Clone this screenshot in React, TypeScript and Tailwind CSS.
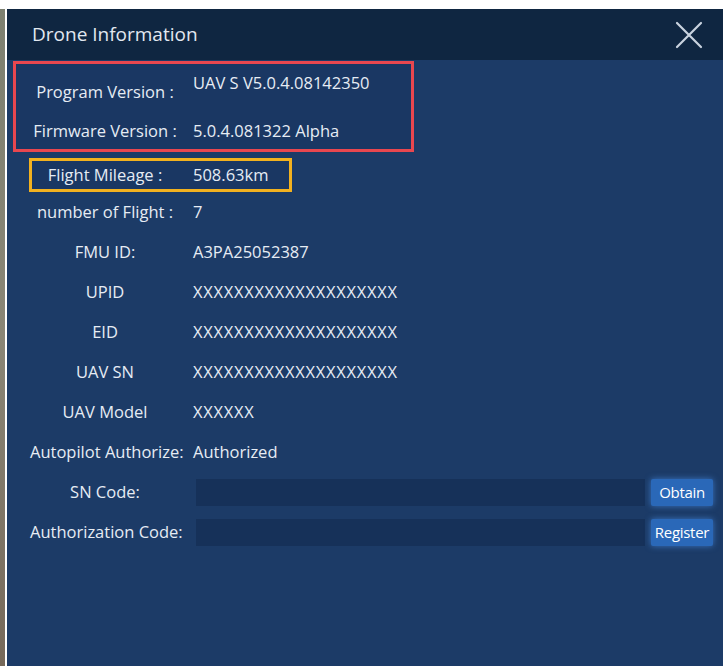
import React from 'react';

type Row = { label: string; value?: string; wide?: boolean };

const rows: Row[] = [
  { label: 'number of Flight :', value: '7' },
  { label: 'FMU ID:', value: 'A3PA25052387' },
  { label: 'UPID', value: 'XXXXXXXXXXXXXXXXXXXX', wide: true },
  { label: 'EID', value: 'XXXXXXXXXXXXXXXXXXXX', wide: true },
  { label: 'UAV SN', value: 'XXXXXXXXXXXXXXXXXXXX', wide: true },
  { label: 'UAV Model', value: 'XXXXXX', wide: true },
  { label: 'Autopilot Authorize:', value: 'Authorized' },
];

function Label({ children }: { children: React.ReactNode }) {
  return <div className="w-[150px] shrink-0 text-center whitespace-nowrap">{children}</div>;
}

function CodeRow({ label, action }: { label: string; action: string }) {
  return (
    <div className="flex h-[40px] items-center pl-[23px] pr-[10px]">
      <Label>{label}</Label>
      <div className="ml-[16px] h-[27px] flex-1 bg-[#163159]" />
      <button className="ml-[6px] h-[27px] w-[62px] rounded-[2px] bg-[#2a68b8] text-[15px] tracking-[-0.3px] text-white shadow-[0_0_6px_rgba(70,140,230,0.7)]">
        {action}
      </button>
    </div>
  );
}

export default function App() {
  return (
    <div
      className="flex h-[666px] w-[723px] flex-col overflow-hidden bg-white pt-[9px] text-[16.5px] text-[#e6ecf4]"
      style={{ fontFamily: '"Open Sans", "Noto Sans", sans-serif' }}
    >
      <div className="flex flex-1">
        {/* map peeking out behind the dialog */}
        <div className="w-[5px] bg-gradient-to-b from-[#7d8070] via-[#8a8676] to-[#76695a]" />
        <div className="w-[2px] bg-white" />

        <div className="flex flex-1 flex-col bg-[#1c3b67]">
          <div className="flex h-[51px] items-center justify-between bg-[#0f2641] pl-[25px] pr-[20px]">
            <span className="text-[19px] text-[#e2e8f0]">Drone Information</span>
            <svg width="28" height="28" viewBox="0 0 28 28" className="mt-[1px]">
              <path d="M2 2 L26 26 M26 2 L2 26" stroke="#c9d3df" strokeWidth="2.2" strokeLinecap="round" />
            </svg>
          </div>

          {/* version info */}
          <div className="ml-[6px] mt-[1px] h-[91px] w-[401px] border-[3px] border-[#e9474f] bg-[#1a3763]">
            <div className="flex h-[50px] pl-[14px]">
              <div className="flex w-[150px] items-center justify-center pt-[7px] whitespace-nowrap">Program Version :</div>
              <div className="ml-[13px] pt-[7px]">UAV S V5.0.4.08142350</div>
            </div>
            <div className="flex h-[35px] items-center pl-[14px]">
              <Label>Firmware Version :</Label>
              <div className="ml-[13px]">5.0.4.081322 Alpha</div>
            </div>
          </div>

          <div className="ml-[22px] mt-[6px] flex h-[34px] w-[263px] items-center border-[3px] border-[#f2b11f] bg-[#1a3763]">
            <div className="ml-[-2px] w-[150px] shrink-0 text-center whitespace-nowrap">Flight Mileage :</div>
            <div className="ml-[13px]">508.63km</div>
          </div>

          {rows.map((r) => (
            <div key={r.label} className="flex h-[40px] items-center pl-[23px]">
              <Label>{r.label}</Label>
              <div className={`ml-[13px] ${r.wide ? 'tracking-[0.7px]' : ''}`}>{r.value}</div>
            </div>
          ))}

          <CodeRow label="SN Code:" action="Obtain" />
          <CodeRow label="Authorization Code:" action="Register" />
        </div>
      </div>
    </div>
  );
}
